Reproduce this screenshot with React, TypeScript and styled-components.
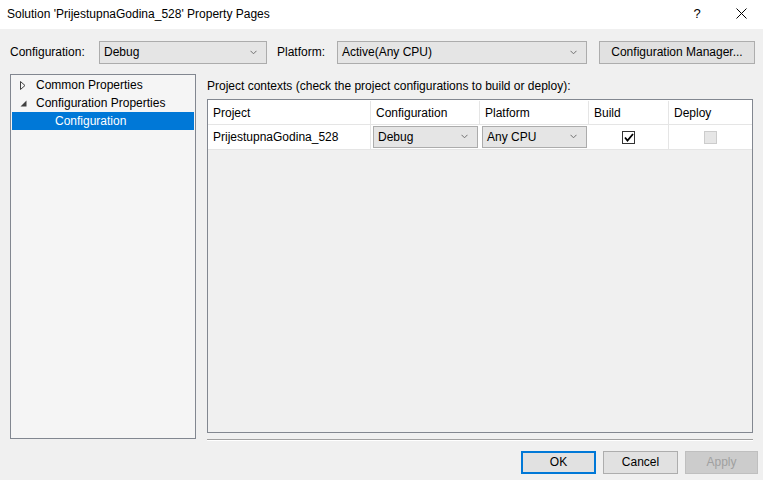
import React from 'react';
import styled, { createGlobalStyle } from 'styled-components';

const GlobalStyle = createGlobalStyle`
  html, body {
    margin: 0;
    padding: 0;
    background: #f0f0f0;
  }
  body {
    font-family: 'Segoe UI', 'Liberation Sans', Arial, sans-serif;
    font-size: 12px;
    color: #000;
  }
`;

const Window = styled.div`
  width: 763px;
  height: 480px;
  display: flex;
  flex-direction: column;
  background: #f0f0f0;
  overflow: hidden;
`;

const TitleBar = styled.div`
  height: 29px;
  flex: none;
  display: flex;
  align-items: center;
  background: #fff;
  padding-left: 7px;
`;

const Title = styled.div`
  flex: 1;
  padding-bottom: 2px;
`;

const TitleButton = styled.div`
  width: 44px;
  height: 29px;
  display: flex;
  align-items: center;
  justify-content: center;
  font-size: 13px;
  padding-bottom: 3px;
  box-sizing: border-box;
`;

const Body = styled.div`
  flex: 1;
  display: flex;
  flex-direction: column;
  padding: 12px 10px 0 10px;
`;

const TopRow = styled.div`
  display: flex;
  align-items: center;
  height: 23px;
`;

const Label = styled.span<{ $w: number; $gap?: number }>`
  width: ${p => p.$w}px;
  margin-left: ${p => p.$gap ?? 0}px;
  flex: none;
  padding-bottom: 1px;
`;

const Combo = styled.div<{ $w: number; $h?: number }>`
  width: ${p => p.$w}px;
  height: ${p => p.$h ?? 23}px;
  box-sizing: border-box;
  flex: none;
  display: flex;
  align-items: center;
  justify-content: space-between;
  padding: 0 9px 1px 4px;
  background: #e5e5e5;
  border: 1px solid #acacac;
`;

const Chevron = () => (
  <svg width="7" height="5" viewBox="0 0 7 5">
    <path d="M0.5 0.8 L3.5 3.8 L6.5 0.8" fill="none" stroke="#707070" strokeWidth="1" />
  </svg>
);

const Button = styled.div<{ $w: number; $gap?: number; $primary?: boolean; $disabled?: boolean }>`
  width: ${p => p.$w}px;
  height: 23px;
  margin-left: ${p => p.$gap ?? 0}px;
  box-sizing: border-box;
  flex: none;
  display: flex;
  align-items: center;
  justify-content: center;
  padding-bottom: 1px;
  background: ${p => (p.$disabled ? '#cccccc' : '#e1e1e1')};
  color: ${p => (p.$disabled ? '#a0a0a0' : '#000')};
  border: ${p => (p.$primary ? '2px solid #0078d7' : p.$disabled ? '1px solid #bfbfbf' : '1px solid #adadad')};
`;

const Content = styled.div`
  display: flex;
  margin-top: 10px;
  height: 365px;
  flex: none;
`;

const Tree = styled.div`
  width: 186px;
  box-sizing: border-box;
  border: 1px solid #828790;
  background: #f5f5f5;
  padding: 1px;
  flex: none;
`;

const TreeRow = styled.div<{ $indent: number; $selected?: boolean }>`
  height: 18px;
  display: flex;
  align-items: center;
  padding-left: ${p => p.$indent}px;
  background: ${p => (p.$selected ? '#0078d7' : 'transparent')};
  color: ${p => (p.$selected ? '#fff' : '#000')};
`;

const Expander = styled.span`
  width: 16px;
  display: flex;
  align-items: center;
`;

const RightPane = styled.div`
  flex: 1;
  margin-left: 11px;
  display: flex;
  flex-direction: column;
`;

const PaneLabel = styled.div`
  height: 25px;
  flex: none;
  display: flex;
  align-items: center;
  padding-bottom: 2px;
  box-sizing: border-box;
`;

const Grid = styled.div`
  height: 334px;
  flex: none;
  box-sizing: border-box;
  border: 1px solid #828790;
  background: #f0f0f0;
  display: flex;
  flex-direction: column;
`;

const GridRow = styled.div<{ $header?: boolean }>`
  display: grid;
  grid-template-columns: 163px 109px 109px 80px 1fr;
  height: 25px;
  padding-top: ${p => (p.$header ? 1 : 0)}px;
  box-sizing: border-box;
  flex: none;
  background: #fff;
  border-bottom: 1px solid #e5e5e5;
`;

const Cell = styled.div<{ $center?: boolean; $line?: boolean }>`
  display: flex;
  align-items: center;
  justify-content: ${p => (p.$center ? 'center' : 'flex-start')};
  padding-left: ${p => (p.$center ? 0 : 5)}px;
  border-right: ${p => (p.$line ? '1px solid #e5e5e5' : 'none')};
`;

const ComboCell = styled.div`
  display: flex;
  align-items: center;
  padding-left: 2px;
`;

const CheckBox = styled.div<{ $disabled?: boolean }>`
  width: 13px;
  height: 13px;
  box-sizing: border-box;
  border: 1px solid ${p => (p.$disabled ? '#cccccc' : '#333')};
  background: ${p => (p.$disabled ? '#e6e6e6' : '#fff')};
  display: flex;
  align-items: center;
  justify-content: center;
`;

const Separator = styled.div`
  margin-top: 6px;
  height: 1px;
  flex: none;
  background: #a0a0a0;
  border-bottom: 1px solid #fff;
`;

const Footer = styled.div`
  display: flex;
  justify-content: flex-end;
  gap: 7px;
  margin-top: 12px;
  margin-right: -5px;
`;

export default function App() {
  return (
    <>
      <GlobalStyle />
      <Window>
        <TitleBar>
          <Title>Solution 'PrijestupnaGodina_528' Property Pages</Title>
          <TitleButton>?</TitleButton>
          <TitleButton>
            <svg width="11" height="11" viewBox="0 0 11 11">
              <path d="M0.5 0.5 L10.5 10.5 M10.5 0.5 L0.5 10.5" stroke="#000" strokeWidth="1" />
            </svg>
          </TitleButton>
        </TitleBar>
        <Body>
          <TopRow>
            <Label $w={89}>Configuration:</Label>
            <Combo $w={168}>
              <span>Debug</span>
              <Chevron />
            </Combo>
            <Label $w={60} $gap={10}>Platform:</Label>
            <Combo $w={250}>
              <span>Active(Any CPU)</span>
              <Chevron />
            </Combo>
            <Button $w={156} $gap={12}>Configuration Manager...</Button>
          </TopRow>
          <Content>
            <Tree>
              <TreeRow $indent={8}>
                <Expander>
                  <svg width="6" height="9" viewBox="0 0 6 9">
                    <path d="M0.5 0.5 L5 4.5 L0.5 8.5 Z" fill="none" stroke="#404040" strokeWidth="1" />
                  </svg>
                </Expander>
                Common Properties
              </TreeRow>
              <TreeRow $indent={8}>
                <Expander>
                  <svg width="7" height="7" viewBox="0 0 7 7">
                    <path d="M6.5 0.5 L6.5 6.5 L0.5 6.5 Z" fill="#404040" />
                  </svg>
                </Expander>
                Configuration Properties
              </TreeRow>
              <TreeRow $indent={43} $selected>Configuration</TreeRow>
            </Tree>
            <RightPane>
              <PaneLabel>Project contexts (check the project configurations to build or deploy):</PaneLabel>
              <Grid>
                <GridRow $header>
                  <Cell $line>Project</Cell>
                  <Cell $line>Configuration</Cell>
                  <Cell $line>Platform</Cell>
                  <Cell $line>Build</Cell>
                  <Cell>Deploy</Cell>
                </GridRow>
                <GridRow>
                  <Cell $line>PrijestupnaGodina_528</Cell>
                  <ComboCell>
                    <Combo $w={105} $h={22}>
                      <span>Debug</span>
                      <Chevron />
                    </Combo>
                  </ComboCell>
                  <ComboCell>
                    <Combo $w={105} $h={22}>
                      <span>Any CPU</span>
                      <Chevron />
                    </Combo>
                  </ComboCell>
                  <Cell $center $line>
                    <CheckBox>
                      <svg width="10" height="9" viewBox="0 0 10 9">
                        <path d="M1 4.5 L3.5 7.5 L9 1" fill="none" stroke="#000" strokeWidth="1.8" />
                      </svg>
                    </CheckBox>
                  </Cell>
                  <Cell $center>
                    <CheckBox $disabled />
                  </Cell>
                </GridRow>
              </Grid>
              <Separator />
            </RightPane>
          </Content>
          <Footer>
            <Button $w={75} $primary>OK</Button>
            <Button $w={75}>Cancel</Button>
            <Button $w={73} $disabled>Apply</Button>
          </Footer>
        </Body>
      </Window>
    </>
  );
}
